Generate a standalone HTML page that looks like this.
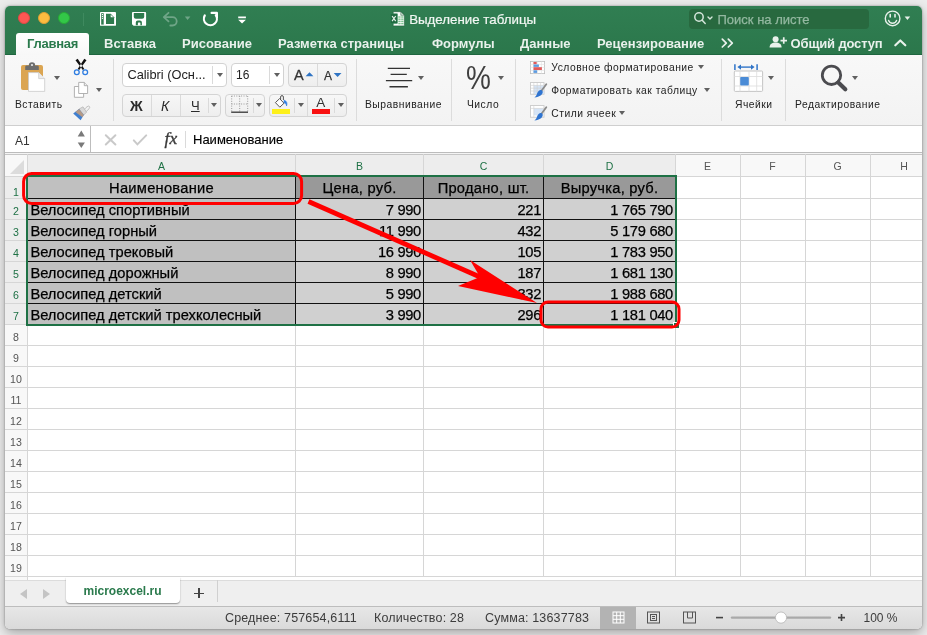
<!DOCTYPE html>
<html lang="ru">
<head>
<meta charset="utf-8">
<title>Выделение таблицы</title>
<style>
*{box-sizing:border-box;margin:0;padding:0}
html,body{width:927px;height:635px;overflow:hidden}
body{background:#ececec;font-family:"Liberation Sans",sans-serif;position:relative}
.abs,.win *{position:absolute}
.win{position:absolute;left:5px;top:6px;width:917px;height:623px;border-radius:5px 5px 5px 5px;overflow:hidden;background:#fff;box-shadow:0 0 2px rgba(0,0,0,.4),0 4px 12px rgba(0,0,0,.3)}
/* coordinates inside .win are page coords minus (5,6); helper wrapper shifts back */
.pg{left:-5px;top:-6px;width:927px;height:635px;will-change:transform;transform:translateZ(0)}
.title{left:0;top:0;width:927px;height:55px;background:linear-gradient(#317f53,#2b774b)}
.t{white-space:nowrap;line-height:1}
.tab{color:#e9f1ec;font-weight:bold;font-size:13px;top:37px}
.rt{font-size:10.3px;color:#222;letter-spacing:.5px}
.sep{width:1px;background:#dcdcdc;top:59px;height:62px}
.box{background:#fff;border:1px solid #d2d2d2;border-radius:4px}
.grp{background:linear-gradient(#f7f7f7,#eeeeee);border:1px solid #d4d4d4;border-radius:4px}
.dv{width:1px;background:#dadada}
.ch{top:161px;width:20px;text-align:center;font-size:10.5px}
.rh{left:5px;width:22px;text-align:center;font-size:10.6px}
.cell{font-size:14.7px;color:#000;line-height:23px;overflow:hidden;-webkit-text-stroke:.25px #000}
.st{top:611.6px;font-size:12.5px;letter-spacing:.15px;color:#3c3c3c}
.arr{width:0;height:0;border-left:3px solid transparent;border-right:3px solid transparent;border-top:4.1px solid #606060}
</style>
</head>
<body>
<div class="win"><div class="pg">

<!-- TITLE BAR -->
<div class="title"></div>
<div style="left:0;top:54px;width:927px;height:1px;background:#1f6640"></div>
<div style="left:18px;top:12px;width:12px;height:12px;border-radius:50%;background:#fc5753;border:.5px solid #df4744"></div>
<div style="left:38px;top:12px;width:12px;height:12px;border-radius:50%;background:#fdbc40;border:.5px solid #de9f34"></div>
<div style="left:58px;top:12px;width:12px;height:12px;border-radius:50%;background:#33c748;border:.5px solid #27aa35"></div>
<div style="left:83px;top:13px;width:1px;height:13px;background:#3f8a5f"></div>

<div class="t" style="left:409.2px;top:12.7px;font-size:13.3px;color:#f2f7f3;-webkit-text-stroke:.2px #f2f7f3">Выделение таблицы</div>

<!-- search -->
<div style="left:689.3px;top:9px;width:180px;height:19.6px;border-radius:4px;background:#28693f"></div>
<div class="t" style="left:717.5px;top:12.6px;font-size:13px;color:#93b8a0;-webkit-text-stroke:.25px #93b8a0">Поиск на листе</div>

<!-- tabs -->
<div style="left:16px;top:33px;width:73px;height:23px;background:linear-gradient(#ffffff,#f7f7f7);border-radius:3px 3px 0 0"></div>
<div class="t tab" style="left:27px;color:#2a7a4c;letter-spacing:-.25px">Главная</div>
<div class="t tab" style="left:104px">Вставка</div>
<div class="t tab" style="left:182px">Рисование</div>
<div class="t tab" style="left:278px">Разметка страницы</div>
<div class="t tab" style="left:432px">Формулы</div>
<div class="t tab" style="left:520px">Данные</div>
<div class="t tab" style="left:597px">Рецензирование</div>
<div class="t tab" style="left:790.6px;letter-spacing:-.15px">Общий доступ</div>

<!-- RIBBON -->
<div style="left:0;top:55px;width:927px;height:71px;background:linear-gradient(#f8f8f8,#f3f3f3);border-bottom:1px solid #cfcfcf"></div>
<div class="t rt" style="left:15px;top:99.5px">Вставить</div>
<div class="arr" style="left:53.5px;top:75.7px"></div>
<div class="arr" style="left:95.5px;top:87.7px"></div>
<div class="sep" style="left:113px"></div>

<div class="box" style="left:122px;top:63px;width:105px;height:24px"></div>
<div class="t" style="left:127.4px;top:68.8px;font-size:12.8px;color:#222">Calibri (Осн...</div>
<div class="dv" style="left:212px;top:66px;height:18px"></div>
<div class="arr" style="left:216.6px;top:72.8px"></div>

<div class="box" style="left:231px;top:63px;width:53px;height:24px"></div>
<div class="t" style="left:236px;top:69px;font-size:12px;color:#222">16</div>
<div class="dv" style="left:269px;top:66px;height:18px"></div>
<div class="arr" style="left:273.5px;top:72.8px"></div>

<div class="grp" style="left:288px;top:63px;width:59px;height:24px"></div>
<div class="dv" style="left:317px;top:64px;height:22px"></div>
<div class="t" style="left:294px;top:67.5px;font-size:14.5px;color:#333;-webkit-text-stroke:.3px #333">A</div>

<div class="t" style="left:324px;top:69.5px;font-size:12px;color:#333;-webkit-text-stroke:.25px #333">A</div>


<div class="grp" style="left:122px;top:94px;width:99px;height:23px"></div>
<div class="dv" style="left:151px;top:95px;height:21px"></div>
<div class="dv" style="left:180px;top:95px;height:21px"></div>
<div class="dv" style="left:208px;top:98px;height:15px"></div>
<div class="t" style="left:130px;top:99px;font-size:14px;font-weight:bold;color:#2b2b2b">Ж</div>
<div class="t" style="left:161px;top:99px;font-size:14px;font-style:italic;color:#2b2b2b">К</div>
<div class="t" style="left:191px;top:99px;font-size:13px;color:#2b2b2b;text-decoration:underline">Ч</div>
<div class="arr" style="left:211.4px;top:102.7px"></div>

<div class="grp" style="left:225px;top:94px;width:40px;height:23px"></div>
<div class="dv" style="left:253px;top:98px;height:15px"></div>
<div class="arr" style="left:255.6px;top:102.7px"></div>

<div class="grp" style="left:269px;top:94px;width:78px;height:23px"></div>
<div class="dv" style="left:294px;top:98px;height:15px"></div>
<div class="dv" style="left:307px;top:95px;height:21px"></div>
<div class="dv" style="left:334px;top:98px;height:15px"></div>
<div class="arr" style="left:297.6px;top:102.7px"></div>
<div class="arr" style="left:337.6px;top:102.7px"></div>
<div style="left:272.3px;top:109.2px;width:17.5px;height:4.5px;background:#fdf01a"></div>
<div style="left:312px;top:109.2px;width:18px;height:4.5px;background:#f81010"></div>
<div class="t" style="left:316.2px;top:95.6px;font-size:13.5px;color:#333">A</div>

<div class="sep" style="left:356px"></div>
<div class="t rt" style="left:365px;top:99.5px">Выравнивание</div>
<div class="arr" style="left:417.5px;top:75.8px"></div>
<div class="sep" style="left:451px"></div>
<div class="t" style="left:466px;top:62.4px;font-size:32.5px;color:#404040;transform:scaleX(.86);transform-origin:0 0">%</div>
<div class="arr" style="left:497.5px;top:75.8px"></div>
<div class="t rt" style="left:467px;top:99.5px">Число</div>
<div class="sep" style="left:515px"></div>
<div class="t rt" style="left:551.3px;top:62.8px">Условное форматирование</div>
<div class="t rt" style="left:551.3px;top:85.5px">Форматировать как таблицу</div>
<div class="t rt" style="left:551.3px;top:108.5px">Стили ячеек</div>
<div class="arr" style="left:697.5px;top:64.8px"></div>
<div class="arr" style="left:703.6px;top:87.6px"></div>
<div class="arr" style="left:618.5px;top:110.6px"></div>
<div class="sep" style="left:721px"></div>
<div class="arr" style="left:767.6px;top:75.8px"></div>
<div class="t rt" style="left:735px;top:99.5px">Ячейки</div>
<div class="sep" style="left:785px"></div>
<div class="arr" style="left:852.3px;top:75.8px"></div>
<div class="t rt" style="left:795px;top:99.5px">Редактирование</div>

<!-- FORMULA BAR -->
<div style="left:0;top:126px;width:927px;height:26px;background:#fff"></div>
<div style="left:89.5px;top:126px;width:1px;height:27px;background:#bdbdbd"></div>
<div class="t" style="left:15px;top:134.6px;font-size:12px;color:#333">A1</div>
<div class="t" style="left:193px;top:133.4px;font-size:13px;color:#000;-webkit-text-stroke:.15px #000">Наименование</div>
<div class="t" style="left:164.6px;top:130.2px;font-size:17.5px;font-style:italic;font-family:'Liberation Serif',serif;color:#3a3a3a;-webkit-text-stroke:.35px #3a3a3a">fx</div>
<div class="dv" style="left:185px;top:131px;height:17px"></div>

<!-- GRID START -->
<div style="left:0;top:152px;width:927px;height:1px;background:#bcbcbc"></div>
<div style="left:0;top:153px;width:927px;height:1px;background:#f4f4f4"></div>
<div style="left:0;top:154px;width:927px;height:1px;background:#c6c6c6"></div>
<div style="left:0;top:155px;width:927px;height:22px;background:#f8f8f8"></div>
<div style="left:0;top:177px;width:27px;height:401px;background:#f8f8f8"></div>
<div style="left:28px;top:155px;width:648px;height:21px;background:#ededed"></div>
<div style="left:5px;top:177px;width:22px;height:148px;background:#ededed"></div>
<div style="left:10px;top:160px;width:0;height:0;border-left:14px solid transparent;border-bottom:14px solid #dcdcdc"></div>
<div style="left:27px;top:154px;width:1px;height:424px;background:#d6d6d6"></div>
<div style="left:295px;top:154px;width:1px;height:424px;background:#d6d6d6"></div>
<div style="left:423px;top:154px;width:1px;height:424px;background:#d6d6d6"></div>
<div style="left:543px;top:154px;width:1px;height:424px;background:#d6d6d6"></div>
<div style="left:675px;top:154px;width:1px;height:424px;background:#d6d6d6"></div>
<div style="left:740px;top:154px;width:1px;height:424px;background:#d6d6d6"></div>
<div style="left:805px;top:154px;width:1px;height:424px;background:#d6d6d6"></div>
<div style="left:870px;top:154px;width:1px;height:424px;background:#d6d6d6"></div>
<div style="left:5px;top:176px;width:917px;height:1px;background:#d6d6d6"></div>
<div style="left:5px;top:198px;width:917px;height:1px;background:#d6d6d6"></div>
<div style="left:5px;top:219px;width:917px;height:1px;background:#d6d6d6"></div>
<div style="left:5px;top:240px;width:917px;height:1px;background:#d6d6d6"></div>
<div style="left:5px;top:261px;width:917px;height:1px;background:#d6d6d6"></div>
<div style="left:5px;top:282px;width:917px;height:1px;background:#d6d6d6"></div>
<div style="left:5px;top:303px;width:917px;height:1px;background:#d6d6d6"></div>
<div style="left:5px;top:324px;width:917px;height:1px;background:#d6d6d6"></div>
<div style="left:5px;top:345px;width:917px;height:1px;background:#d6d6d6"></div>
<div style="left:5px;top:366px;width:917px;height:1px;background:#d6d6d6"></div>
<div style="left:5px;top:387px;width:917px;height:1px;background:#d6d6d6"></div>
<div style="left:5px;top:408px;width:917px;height:1px;background:#d6d6d6"></div>
<div style="left:5px;top:429px;width:917px;height:1px;background:#d6d6d6"></div>
<div style="left:5px;top:450px;width:917px;height:1px;background:#d6d6d6"></div>
<div style="left:5px;top:471px;width:917px;height:1px;background:#d6d6d6"></div>
<div style="left:5px;top:492px;width:917px;height:1px;background:#d6d6d6"></div>
<div style="left:5px;top:513px;width:917px;height:1px;background:#d6d6d6"></div>
<div style="left:5px;top:534px;width:917px;height:1px;background:#d6d6d6"></div>
<div style="left:5px;top:555px;width:917px;height:1px;background:#d6d6d6"></div>
<div style="left:5px;top:576px;width:917px;height:1px;background:#d6d6d6"></div>
<div style="left:28px;top:175px;width:648px;height:2px;background:#1e7145"></div>
<div class="t ch" style="left:151.5px;color:#1e7145">A</div>
<div class="t ch" style="left:349.5px;color:#1e7145">B</div>
<div class="t ch" style="left:473.5px;color:#1e7145">C</div>
<div class="t ch" style="left:599.5px;color:#1e7145">D</div>
<div class="t ch" style="left:697.5px;color:#555">E</div>
<div class="t ch" style="left:762.5px;color:#555">F</div>
<div class="t ch" style="left:827.5px;color:#555">G</div>
<div class="t ch" style="left:894px;color:#555">H</div>
<div class="t rh" style="top:186.6px;color:#1e7145">1</div>
<div class="t rh" style="top:206.4px;color:#1e7145">2</div>
<div class="t rh" style="top:227.4px;color:#1e7145">3</div>
<div class="t rh" style="top:248.4px;color:#1e7145">4</div>
<div class="t rh" style="top:269.4px;color:#1e7145">5</div>
<div class="t rh" style="top:290.4px;color:#1e7145">6</div>
<div class="t rh" style="top:311.4px;color:#1e7145">7</div>
<div class="t rh" style="top:332.4px;color:#555">8</div>
<div class="t rh" style="top:353.4px;color:#555">9</div>
<div class="t rh" style="top:374.4px;color:#555">10</div>
<div class="t rh" style="top:395.4px;color:#555">11</div>
<div class="t rh" style="top:416.4px;color:#555">12</div>
<div class="t rh" style="top:437.4px;color:#555">13</div>
<div class="t rh" style="top:458.4px;color:#555">14</div>
<div class="t rh" style="top:479.4px;color:#555">15</div>
<div class="t rh" style="top:500.4px;color:#555">16</div>
<div class="t rh" style="top:521.4px;color:#555">17</div>
<div class="t rh" style="top:542.4px;color:#555">18</div>
<div class="t rh" style="top:563.4px;color:#555">19</div>
<div style="left:28px;top:177px;width:648px;height:148px;background:#111"></div>
<div class="t cell" style="left:28px;top:177px;width:267px;height:21px;background:#c0c0c0;text-align:center;letter-spacing:.25px;">Наименование</div>
<div class="t cell" style="left:296px;top:177px;width:127px;height:21px;background:#999999;text-align:center;letter-spacing:.25px;">Цена, руб.</div>
<div class="t cell" style="left:424px;top:177px;width:119px;height:21px;background:#999999;text-align:center;letter-spacing:.25px;">Продано, шт.</div>
<div class="t cell" style="left:544px;top:177px;width:131px;height:21px;background:#999999;text-align:center;letter-spacing:.25px;">Выручка, руб.</div>
<div class="t cell" style="left:28px;top:199px;width:267px;height:20px;background:#c0c0c0;text-align:left;padding-left:2.4px;">Велосипед спортивный</div>
<div class="t cell" style="left:296px;top:199px;width:127px;height:20px;background:#d0d0d0;text-align:right;padding-right:2px;letter-spacing:-.3px;">7 990</div>
<div class="t cell" style="left:424px;top:199px;width:119px;height:20px;background:#d0d0d0;text-align:right;padding-right:2px;letter-spacing:-.3px;">221</div>
<div class="t cell" style="left:544px;top:199px;width:131px;height:20px;background:#d0d0d0;text-align:right;padding-right:2px;letter-spacing:-.3px;">1 765 790</div>
<div class="t cell" style="left:28px;top:220px;width:267px;height:20px;background:#c0c0c0;text-align:left;padding-left:2.4px;">Велосипед горный</div>
<div class="t cell" style="left:296px;top:220px;width:127px;height:20px;background:#d0d0d0;text-align:right;padding-right:2px;letter-spacing:-.3px;">11 990</div>
<div class="t cell" style="left:424px;top:220px;width:119px;height:20px;background:#d0d0d0;text-align:right;padding-right:2px;letter-spacing:-.3px;">432</div>
<div class="t cell" style="left:544px;top:220px;width:131px;height:20px;background:#d0d0d0;text-align:right;padding-right:2px;letter-spacing:-.3px;">5 179 680</div>
<div class="t cell" style="left:28px;top:241px;width:267px;height:20px;background:#c0c0c0;text-align:left;padding-left:2.4px;">Велосипед трековый</div>
<div class="t cell" style="left:296px;top:241px;width:127px;height:20px;background:#d0d0d0;text-align:right;padding-right:2px;letter-spacing:-.3px;">16 990</div>
<div class="t cell" style="left:424px;top:241px;width:119px;height:20px;background:#d0d0d0;text-align:right;padding-right:2px;letter-spacing:-.3px;">105</div>
<div class="t cell" style="left:544px;top:241px;width:131px;height:20px;background:#d0d0d0;text-align:right;padding-right:2px;letter-spacing:-.3px;">1 783 950</div>
<div class="t cell" style="left:28px;top:262px;width:267px;height:20px;background:#c0c0c0;text-align:left;padding-left:2.4px;">Велосипед дорожный</div>
<div class="t cell" style="left:296px;top:262px;width:127px;height:20px;background:#d0d0d0;text-align:right;padding-right:2px;letter-spacing:-.3px;">8 990</div>
<div class="t cell" style="left:424px;top:262px;width:119px;height:20px;background:#d0d0d0;text-align:right;padding-right:2px;letter-spacing:-.3px;">187</div>
<div class="t cell" style="left:544px;top:262px;width:131px;height:20px;background:#d0d0d0;text-align:right;padding-right:2px;letter-spacing:-.3px;">1 681 130</div>
<div class="t cell" style="left:28px;top:283px;width:267px;height:20px;background:#c0c0c0;text-align:left;padding-left:2.4px;">Велосипед детский</div>
<div class="t cell" style="left:296px;top:283px;width:127px;height:20px;background:#d0d0d0;text-align:right;padding-right:2px;letter-spacing:-.3px;">5 990</div>
<div class="t cell" style="left:424px;top:283px;width:119px;height:20px;background:#d0d0d0;text-align:right;padding-right:2px;letter-spacing:-.3px;">332</div>
<div class="t cell" style="left:544px;top:283px;width:131px;height:20px;background:#d0d0d0;text-align:right;padding-right:2px;letter-spacing:-.3px;">1 988 680</div>
<div class="t cell" style="left:28px;top:304px;width:267px;height:20px;background:#c0c0c0;text-align:left;padding-left:2.4px;">Велосипед детский трехколесный</div>
<div class="t cell" style="left:296px;top:304px;width:127px;height:20px;background:#d0d0d0;text-align:right;padding-right:2px;letter-spacing:-.3px;">3 990</div>
<div class="t cell" style="left:424px;top:304px;width:119px;height:20px;background:#d0d0d0;text-align:right;padding-right:2px;letter-spacing:-.3px;">296</div>
<div class="t cell" style="left:544px;top:304px;width:131px;height:20px;background:#d0d0d0;text-align:right;padding-right:2px;letter-spacing:-.3px;">1 181 040</div>
<div style="left:26px;top:175px;width:651px;height:151px;border:2px solid #1e7145"></div>
<div style="left:673px;top:322px;width:6px;height:6px;background:#1e7145;border:1px solid #fff;border-right:0;border-bottom:0"></div>
<svg style="left:0;top:0" width="927" height="635" viewBox="0 0 927 635">
<rect x="23.6" y="173.5" width="278" height="30" rx="8" ry="8" fill="none" stroke="#ff0000" stroke-width="3"/>
<rect x="541" y="302" width="138" height="25" rx="7" ry="7" fill="none" stroke="#ff0000" stroke-width="3"/>
<line x1="308.5" y1="201.5" x2="480" y2="277" stroke="#ff0000" stroke-width="4.8"/>
<polygon points="537,303 470,260 480,277 458,286" fill="#ff0000"/>
</svg>
<!-- GRID END -->

<!-- SHEET TABS -->
<div style="left:0;top:577px;width:927px;height:3px;background:#fff"></div>
<div style="left:0;top:580px;width:927px;height:26px;background:#efefef;box-shadow:inset 0 1px 0 #dcdcdc"></div>
<div style="left:0;top:577px;width:27px;height:3px;background:#f8f8f8"></div>
<div style="left:27px;top:577px;width:1px;height:3px;background:#d6d6d6"></div>
<div style="left:66px;top:577px;width:113.5px;height:25.5px;background:#fff;border-radius:0 0 4px 4px;box-shadow:0 1px 1.5px rgba(0,0,0,.4)"></div>
<div class="t" style="left:65.5px;top:585px;width:114px;text-align:center;font-size:12px;font-weight:bold;color:#2a7a4c">microexcel.ru</div>
<div style="left:20px;top:589px;width:0;height:0;border-top:5px solid transparent;border-bottom:5px solid transparent;border-right:7px solid #c4c4c4"></div>
<div style="left:43px;top:589px;width:0;height:0;border-top:5px solid transparent;border-bottom:5px solid transparent;border-left:7px solid #c4c4c4"></div>
<div style="left:194.2px;top:592.6px;width:9.8px;height:1.5px;background:#444"></div>
<div style="left:198.4px;top:588.4px;width:1.5px;height:9.8px;background:#444"></div>
<div style="left:217px;top:580px;width:1px;height:22px;background:#d0d0d0"></div>
<!-- STATUS BAR -->
<div style="left:0;top:606px;width:927px;height:24px;background:linear-gradient(#e7e7e7,#d9d9d9);border-top:1px solid #bdbdbd"></div>
<div class="t st" style="left:225px">Среднее: 757654,6111</div>
<div class="t st" style="left:374px">Количество: 28</div>
<div class="t st" style="left:485px">Сумма: 13637783</div>
<div style="left:600px;top:607px;width:36px;height:23px;background:#b3b3b3"></div>
<div class="t st" style="left:863.5px;font-size:12px;letter-spacing:0;top:612px">100 %</div>
<svg style="left:0;top:0" width="927" height="635" viewBox="0 0 927 635">
<g fill="none" stroke="#fff" stroke-width="1"><rect x="613" y="612" width="11" height="11"/><path d="M616.700 612v11M620.300 612v11M613 615.700h11M613 619.300h11"/></g>
<g fill="none" stroke="#555" stroke-width="1"><rect x="647.500" y="612" width="12" height="11"/><rect x="650.500" y="614.500" width="6" height="6"/><path d="M652 616.500h3M652 618.500h3"/></g>
<g fill="none" stroke="#555" stroke-width="1"><rect x="683.500" y="612" width="12" height="11"/><path d="M687.500 612v6h5v-6"/></g>
<path d="M716 617.600h7" stroke="#444" stroke-width="1.600"/>
<path d="M732 617.600h98" stroke="#a9a9a9" stroke-width="2.400" stroke-linecap="round"/>
<circle cx="781" cy="617.600" r="5.600" fill="#fff" stroke="#b5b5b5" stroke-width=".8"/>
<path d="M838 617.600h7M841.500 614.100v7" stroke="#444" stroke-width="1.600"/>
</svg>

<!-- ICONS START -->
<svg style="left:0;top:0" width="927" height="635" viewBox="0 0 927 635">
<!-- title bar icons -->
<g fill="#fff">
<rect x="100" y="12" width="16" height="13.800" rx=".9"/>
<path d="M132.900 12h12.300a.9 .9 0 0 1 .9 .9v12a.9 .9 0 0 1-.9 .9h-11.600l-1.600-1.600v-11.300a.9 .9 0 0 1 .9-.9z"/>
<path d="M238.200 16.400h7.700v1.800h-7.700zM238.200 19.800h7.700l-3.850 3.600z"/>
</g>
<g fill="#2d7a4d">
<rect x="101.200" y="13.200" width="2.500" height="11.400"/>
<path d="M106 13.800h4.700l3.400 3.400v6.700h-8.100z"/>
<path d="M133.800 12.900h10.400v3.800a2 2 0 0 1-2 2h-6.400a2 2 0 0 1-2-2z"/>
<path d="M135.800 25.200v-2.600a2 2 0 0 1 2-2h2.100a2 2 0 0 1 2 2v2.600h-1.500v-2.200a.6 .6 0 0 0-.6-.6h-1.300a.6 .6 0 0 0-.6 .6v2.200z"/>
</g>
<g fill="#fff"><rect x="101.900" y="14" width="1.100" height="1.100"/><rect x="101.900" y="15.900" width="1.100" height="1.100"/><rect x="101.900" y="17.800" width="1.100" height="1.100"/><path d="M110.700 13.800v3.400h3.400l-.9-.1-2.400-2.400z"/></g>
<g fill="none" stroke="#6fa587" stroke-width="1.8" stroke-linecap="round" stroke-linejoin="round">
<path d="M168.5 12.8l-4.7 4.3 4.7 4.3M164.2 17.1h8.3a4.2 4.2 0 0 1 0 8.4h-2.2"/>
</g>
<path d="M184.8 16.6h5.6l-2.8 3.4z" fill="#6fa587"/>
<g fill="none" stroke="#fff" stroke-width="2.200" stroke-linecap="round" stroke-linejoin="round">
<path d="M204.800 15.400a6.500 6.500 0 1 0 11 -.3M211.600 12.900h5.300v5.300"/>
</g>
<!-- excel doc icon -->
<path d="M393.200 11.700h7.600l3.600 3.600v10.600h-11.200z" fill="#fdfdfd" stroke="#1f5f3b" stroke-width=".6"/>
<path d="M400.800 11.700v3.600h3.600z" fill="#cfe0d5" stroke="#1f5f3b" stroke-width=".5"/>
<g fill="#7cc48f"><rect x="398.300" y="16.300" width="2.300" height="1.400"/><rect x="401.200" y="16.300" width="2.300" height="1.400"/><rect x="398.300" y="18.500" width="2.300" height="1.400"/><rect x="401.200" y="18.500" width="2.300" height="1.400"/><rect x="398.300" y="20.700" width="2.300" height="1.400"/><rect x="401.200" y="20.700" width="2.300" height="1.400"/><rect x="398.300" y="22.900" width="2.300" height="1.400"/><rect x="401.200" y="22.900" width="2.300" height="1.400"/></g>
<rect x="390.500" y="13.800" width="6.900" height="9.600" fill="#1f6b41" stroke="#2f8454" stroke-width=".5"/>
<path d="M392.100 16l3.600 5.200M395.700 16l-3.600 5.200" stroke="#e6efe9" stroke-width="1.200" fill="none"/>
<!-- search icon -->
<g fill="none" stroke="#d5e6db" stroke-width="1.5" stroke-linecap="round">
<circle cx="699" cy="17" r="4.2"/><path d="M702.2 20.3l3 3.2"/><path d="M708 17l2 2 2-2" stroke-width="1.4"/>
</g>
<!-- smiley -->
<g fill="none" stroke="#e8f1eb" stroke-width="1.4" stroke-linecap="round">
<circle cx="892.6" cy="18.4" r="7.3"/><path d="M888.6 20.4a4.2 4.2 0 0 0 8 0"/><path d="M890.2 14.6v2.4M895 14.6v2.4" stroke-width="1.6"/>
</g>
<path d="M904.6 16.5h5.6l-2.8 3.6z" fill="#e8f1eb"/>
<!-- >> -->
<g fill="none" stroke="#e8f1eb" stroke-width="1.7" stroke-linecap="round" stroke-linejoin="round">
<path d="M722.3 39.2l4 3.9-4 3.9M728.3 39.2l4 3.9-4 3.9"/>
<path d="M895.3 45.3l5-4.8 5 4.8" stroke-width="2.2"/>
</g>
<!-- person+ -->
<g fill="#e8f1eb">
<circle cx="775.6" cy="39.3" r="3"/>
<path d="M769.6 47.6c0-3.6 2.6-5 6-5s6 1.4 6 5z"/>
<path d="M782.9 37.3h1.7v2.4h2.4v1.7h-2.4v2.4h-1.7v-2.4h-2.4v-1.7h2.4z"/>
</g>

<!-- RIBBON: paste -->
<rect x="21" y="65" width="22" height="25" rx="2" fill="#dba552"/>
<path d="M25.2 70v-3.2a1.4 1.4 0 0 1 1.4-1.4h2.2a3.2 3.2 0 0 1 6.4 0h2.2a1.4 1.4 0 0 1 1.4 1.4v3.2z" fill="#6d6d6d"/>
<circle cx="32" cy="65" r="1.1" fill="#e9e9e9"/>
<path d="M28.5 72.6h10.2l6 6v12.8h-16.2z" fill="#fff" stroke="#c9c9c9" stroke-width=".8"/>
<path d="M38.7 72.6v6h6" fill="#ececec" stroke="#c9c9c9" stroke-width=".8"/>
<!-- scissors -->
<path d="M75.500 60.300l2.200-1.500 6.600 10.300-1.500 1zM86.500 60.300l-2.200-1.500-6.600 10.300 1.500 1z" fill="#111"/>
<g fill="none" stroke="#2f7de1" stroke-width="1.3"><circle cx="76.8" cy="72.3" r="2.4"/><circle cx="85.2" cy="72.3" r="2.4"/></g>
<!-- copy -->
<g fill="#fff" stroke="#a9a9a9" stroke-width=".9">
<path d="M74.4 86.5h9.2v10.8h-9.2z"/>
<path d="M78.7 82.4h5.6l3.3 3.3v7.8h-8.9z"/><path d="M84.3 82.4v3.3h3.3" fill="#f0f0f0"/>
</g>
<!-- brush -->
<path d="M86 107.5l2-1.3a1.2 1.2 0 0 1 1.6 1.6l-1.6 2.2-3.2 2.6-1.4-1.8z" fill="#f2f2f2" stroke="#b5b5b5" stroke-width=".8"/>
<path d="M79 109l4-2.2 3.6 5.4-2.8 2.8z" fill="#d9d9d9" stroke="#aaa" stroke-width=".6"/>
<path d="M73.2 113.6l5.8-4.6 4.8 6-3.2 5.2z" fill="#3f7fcf"/>
<path d="M75.4 112l3.6-3 4.8 6-1.4 2.2z" fill="#b59a86"/>
<path d="M305.600 76.200h7.800l-3.900-3.900zM333.700 73h7.800l-3.900 4.100z" fill="#2f74c4"/>
<!-- borders icon -->
<g stroke="#9a9a9a" stroke-width="1" stroke-dasharray="1 1.4" fill="none">
<path d="M231.5 96h16.5M231.5 104h16.5M231.7 96v16M239.7 96v16M247.7 96v16"/>
</g>
<path d="M231.2 112.2h16.8" stroke="#333" stroke-width="1.3"/>
<!-- bucket -->
<g fill="none" stroke="#555" stroke-width="1">
<path d="M279.6 98.6l4.4 4.6-4.2 4-4.4-4.6z" fill="#fff"/>
<path d="M280.6 99.6v-2.6a1.4 1.4 0 0 1 2.8 0v3"/>
</g>
<path d="M284.2 100.2c2.4 .8 3.2 3 2.4 5.6-.3-1.6-1-2.6-2.6-3.2z" fill="#2f7de1" stroke="#2f7de1" stroke-width=".8"/>
<!-- align icon -->
<g stroke="#333" stroke-width="1.4" fill="none">
<path d="M387.8 68.4h22.2M390.6 74.4h16.2M385.9 80.6h26.3M389.5 86.7h18.4"/>
</g>
<!-- cond format icons -->
<rect x="530.4" y="61.4" width="14.2" height="12.2" fill="#fff" stroke="#bdbdbd" stroke-width=".8"/>
<path d="M533.4 61.4v12.2M537.4 61.4v12.2M541.4 61.4v12.2M530.4 64.4h14.2M530.4 67.4h14.2M530.4 70.4h14.2" stroke="#dedede" stroke-width=".6" fill="none"/>
<rect x="533.5" y="62" width="3.2" height="2.2" fill="#e05a5a"/><rect x="533.5" y="64.5" width="5.4" height="2.4" fill="#5c9be0"/><rect x="533.5" y="67.2" width="8.4" height="2.8" fill="#e05a5a"/><rect x="533.5" y="70.3" width="3.6" height="2.6" fill="#5c9be0"/>
<g id="tb">
<rect x="530.4" y="82.6" width="13.6" height="11.6" fill="#fff" stroke="#c4c4c4" stroke-width=".8"/>
<rect x="533.8" y="85.4" width="10" height="8.6" fill="#d5e4f6"/>
<path d="M533.8 82.6v11.6M537.2 82.6v11.6M540.6 82.6v11.6M530.4 85.4h13.6M530.4 88.2h13.6M530.4 91h13.6" stroke="#d0d0d0" stroke-width=".6" fill="none"/>
<path d="M546.3 84.2l-5.2 7" stroke="#8a8a8a" stroke-width="1.8" stroke-linecap="round"/>
<path d="M541.8 90.2c1.6 1.2 1 3.6-.8 5-1.6 1.2-4.2 2.2-6.6 2.2 1.8-1.2 2.2-2.6 2.8-4.2.8-2.200 2.800-4 4.600-3z" fill="#2f74d0"/>
</g>
<g>
<rect x="530.400" y="105.600" width="13.600" height="11.600" fill="#fff" stroke="#c4c4c4" stroke-width=".8"/>
<rect x="533.800" y="108.400" width="9.400" height="7" fill="#d5e4f6"/>
<path d="M533.800 105.600v11.600M530.400 108.400h13.600" stroke="#d0d0d0" stroke-width=".6" fill="none"/>
<path d="M546.300 107.200l-5.200 7" stroke="#8a8a8a" stroke-width="1.8" stroke-linecap="round"/>
<path d="M541.800 113.200c1.600 1.200 1 3.600-.8 5-1.600 1.200-4.200 2.200-6.600 2.200 1.800-1.200 2.200-2.600 2.800-4.200.8-2.200 2.800-4 4.600-3z" fill="#2f74d0"/>
</g>
<!-- cells icon -->
<rect x="734.300" y="71" width="28.300" height="20.400" rx="1" fill="#fff" stroke="#bdbdbd" stroke-width=".9"/>
<path d="M740 71v20.400M749 71v20.400M756.700 71v20.400M734.300 76.500h28.300M734.300 86h28.300" stroke="#dcdcdc" stroke-width=".8" fill="none"/>
<rect x="740.200" y="77" width="8.600" height="8.600" rx=".8" fill="#4a8bd6"/>
<g stroke="#2f74c8" fill="none"><path d="M734.900 64.200v5.800M757.100 64.200v5.800" stroke-width="1.500"/><path d="M739 67.100h14" stroke-width="1.400"/></g>
<path d="M737.400 67.100l3.600-2.600v5.200zM754.600 67.100l-3.600-2.600v5.200z" fill="#2f74c8"/>
<!-- magnifier -->
<circle cx="831.500" cy="75.300" r="9.200" fill="none" stroke="#4b4b4f" stroke-width="2.800"/>
<path d="M838.300 82.400l7 6.800" stroke="#4b4b4f" stroke-width="4.200" stroke-linecap="round"/>
<!-- formula bar icons -->
<g fill="none" stroke="#c9c9c9" stroke-width="2" stroke-linecap="round">
<path d="M105.800 135.300l9.600 9.200M115.400 135.300l-9.600 9.200"/>
<path d="M133.800 140.400l3.600 4 8.800-9"/>
</g>
<path d="M77.700 136.600h7.200l-3.600-6zM77.700 142.500h7.200l-3.600 5.600z" fill="#7a7a7a"/>
</svg>

<!-- ICONS END -->
</div></div>
</body>
</html>
